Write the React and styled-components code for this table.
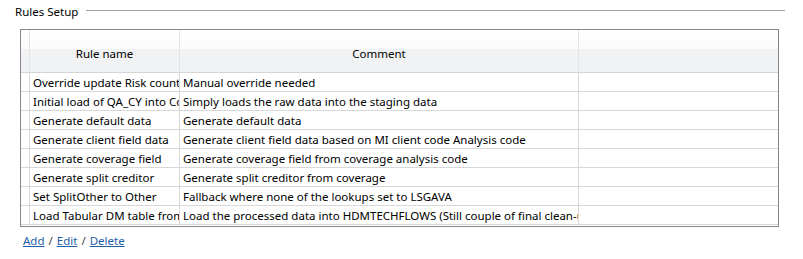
import React from "react";
import styled, { createGlobalStyle } from "styled-components";

const Global = createGlobalStyle`
  html, body { margin: 0; padding: 0; background: #ffffff; }
  body { font-family: "Noto Sans", "Open Sans", "Liberation Sans", sans-serif; font-size: 11.5px; color: #000; }
`;

const Page = styled.div`
  width: 803px;
  height: 259px;
  overflow: hidden;
  background: #fff;
`;

const GroupHeader = styled.div`
  display: flex;
  align-items: center;
  gap: 8px;
  padding-left: 15px;
  margin-right: 18px;
  height: 18px;
  margin-top: 1px;
`;

const Legend = styled.span`
  font-size: 11.5px;
  line-height: 16px;
  color: #000;
  position: relative;
  top: 2px;
`;

const Rule = styled.div`
  flex: 1;
  height: 1px;
  background: #a0a0a0;
`;

const Grid = styled.div`
  margin: 10px 0 0 20px;
  width: 757px;
  height: 196px;
  border: 1px solid #828790;
  display: flex;
  flex-direction: column;
  background: #fff;
`;

const cols = "9px 150px 399px 1fr";

const HeaderRow = styled.div`
  display: grid;
  grid-template-columns: ${cols};
  height: 42px;
  border-bottom: 1px solid #d5d5d5;
  background: linear-gradient(#ffffff 0%, #fbfbfc 45%, #f1f2f4 46%, #f1f2f4 100%);
`;

const HeaderCell = styled.div`
  display: flex;
  align-items: center;
  justify-content: center;
  border-right: 1px solid ${(p) => (p.$last ? "transparent" : "#e2e3e5")};
  font-size: 11.5px;
  padding-top: 4px;
`;

const Row = styled.div`
  display: grid;
  grid-template-columns: ${cols};
  height: 18px;
  border-bottom: 1px solid #d8d8d8;
`;

const Cell = styled.div`
  border-right: 1px solid ${(p) => (p.$last ? "transparent" : "#d8d8d8")};
  padding-left: ${(p) => (p.$stub ? 0 : 3)}px;
  white-space: nowrap;
  overflow: hidden;
  line-height: 19px;
  font-size: 11.5px;
`;

const Links = styled.div`
  margin: 6px 0 0 23px;
  font-size: 11.5px;
  color: #444;
  display: flex;
  gap: 4px;
`;

const Link = styled.a`
  color: #1f5fa8;
  text-decoration: underline;
  cursor: pointer;
`;

const rows = [
  ["Override update Risk count", "Manual override needed"],
  ["Initial load of QA_CY into Core", "Simply loads the raw data into the staging data"],
  ["Generate default data", "Generate default data"],
  ["Generate client field data", "Generate client field data based on MI client code Analysis code"],
  ["Generate coverage field", "Generate coverage field from coverage analysis code"],
  ["Generate split creditor", "Generate split creditor from coverage"],
  ["Set SplitOther to Other", "Fallback where none of the lookups set to LSGAVA"],
  ["Load Tabular DM table from", "Load the processed data into HDMTECHFLOWS (Still couple of final clean-up"],
];

export default function App() {
  return (
    <Page>
      <Global />
      <GroupHeader>
        <Legend>Rules Setup</Legend>
        <Rule />
      </GroupHeader>
      <Grid>
        <HeaderRow>
          <HeaderCell />
          <HeaderCell>Rule name</HeaderCell>
          <HeaderCell>Comment</HeaderCell>
          <HeaderCell $last />
        </HeaderRow>
        {rows.map(([a, b]) => (
          <Row key={a}>
            <Cell $stub />
            <Cell>{a}</Cell>
            <Cell>{b}</Cell>
            <Cell $last />
          </Row>
        ))}
      </Grid>
      <Links>
        <Link>Add</Link>/<Link>Edit</Link>/<Link>Delete</Link>
      </Links>
    </Page>
  );
}
